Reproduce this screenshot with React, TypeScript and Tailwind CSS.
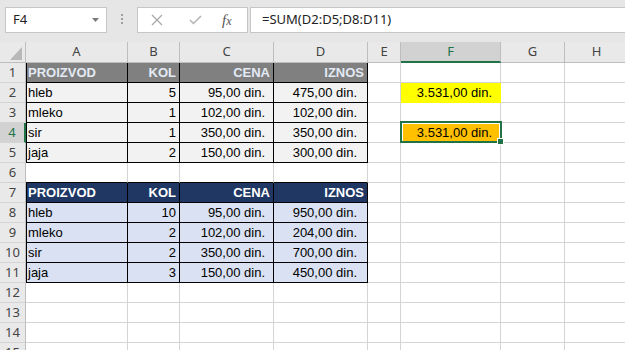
import clsx from "clsx";

type Kind = "h1" | "d1" | "h2" | "d2";

const COLS = ["A", "B", "C", "D", "E", "F", "G", "H"];

const table1 = [
  ["hleb", "5", "95,00 din.", "475,00 din."],
  ["mleko", "1", "102,00 din.", "102,00 din."],
  ["sir", "1", "350,00 din.", "350,00 din."],
  ["jaja", "2", "150,00 din.", "300,00 din."],
];

const table2 = [
  ["hleb", "10", "95,00 din.", "950,00 din."],
  ["mleko", "2", "102,00 din.", "204,00 din."],
  ["sir", "2", "350,00 din.", "700,00 din."],
  ["jaja", "3", "150,00 din.", "450,00 din."],
];

const header = ["PROIZVOD", "KOL", "CENA", "IZNOS"];

const kindBg: Record<Kind, string> = {
  h1: "bg-[#808080] text-[#e3eaf4] font-bold text-[12.5px]",
  d1: "bg-[#f2f2f2] text-black",
  h2: "bg-[#203764] text-white font-bold text-[12.5px]",
  d2: "bg-[#d9e1f2] text-black",
};

const cell =
  "box-border h-5 flex items-center whitespace-nowrap overflow-hidden text-[13px] font-['Liberation_Sans',Arial,sans-serif]";

// right padding of the four table columns (currency has trailing space)
const padFor = (i: number, kind: Kind) => {
  if (i === 0) return "pl-[2px] justify-start";
  if (kind === "h1" || kind === "h2") return "pr-[3px] justify-end";
  if (i === 1) return "pr-[3px] justify-end";
  if (i === 2) return "pr-[8px] justify-end";
  return "pr-[10px] justify-end";
};

function TableCells({ values, kind }: { values: string[]; kind: Kind }) {
  return (
    <>
      {values.map((v, i) => (
        <div
          key={i}
          className={clsx(
            cell,
            kindBg[kind],
            padFor(i, kind),
            "border-r border-b border-black",
            i === 0 && "shadow-[inset_1px_0_0_#000]",
          )}
        >
          {v}
        </div>
      ))}
    </>
  );
}

function Empty({ className }: { className?: string }) {
  return (
    <div
      className={clsx(cell, "border-r border-b border-[#d4d4d4]", className)}
    />
  );
}

function RowHead({ n }: { n: number }) {
  const sel = n === 4;
  return (
    <div
      className={clsx(
        "box-border h-5 flex items-center justify-center text-[13px] font-['Noto_Sans',sans-serif] border-b border-[#d4d4d4]",
        sel
          ? "bg-[#d2d2d2] text-[#217346] border-r-2 border-r-[#217346]"
          : "bg-[#e9e9e9] text-[#444] border-r border-r-[#bdbdbd]",
      )}
    >
      {n}
    </div>
  );
}

function FCell({ n }: { n: number }) {
  if (n === 2) {
    return (
      <div
        className={clsx(
          cell,
          "justify-end pr-[8px] bg-[#ffff00] border-r border-b border-[#ffff00]",
        )}
      >
        3.531,00 din.
      </div>
    );
  }
  if (n === 4) {
    return (
      <div className="relative box-border h-5 border-r border-b border-[#d4d4d4]">
        <div className="absolute left-[2px] top-[1px] w-[96px] h-[17px] bg-[#ffc000]" />
        <div className="absolute -left-px -top-[2px] z-10 w-[102px] h-[22px] border-2 border-[#217346]" />
        <div
          className={clsx(cell, "relative z-10 justify-end pr-[8px] h-[19px]")}
        >
          3.531,00 din.
        </div>
        <div className="absolute left-[96px] top-[15px] z-20 w-[7px] h-[7px] box-border bg-[#217346] border border-white" />
      </div>
    );
  }
  return <Empty />;
}

function Row({ n }: { n: number }) {
  let left: React.ReactNode;
  if (n === 1) left = <TableCells values={header} kind="h1" />;
  else if (n >= 2 && n <= 5)
    left = <TableCells values={table1[n - 2]} kind="d1" />;
  else if (n === 7) left = <TableCells values={header} kind="h2" />;
  else if (n >= 8 && n <= 11)
    left = <TableCells values={table2[n - 8]} kind="d2" />;
  else
    left = [0, 1, 2, 3].map((i) => (
      <Empty key={i} className={n === 6 ? "border-b-black" : undefined} />
    ));

  return (
    <>
      <RowHead n={n} />
      {left}
      <Empty />
      <FCell n={n} />
      <Empty />
      <Empty />
    </>
  );
}

function FormulaBar() {
  return (
    <div className="flex h-[42px] items-start bg-[#e6e6e6] pt-[7px]">
      <div className="ml-[5px] flex h-[26px] w-[102px] items-center justify-between border border-[#c6c6c6] bg-white pl-[7px] pr-[6px] font-['Noto_Sans',sans-serif] text-[13px] text-[#222]">
        <span>F4</span>
        <svg width="8" height="5" viewBox="0 0 8 5">
          <path d="M0 0 L7 0 L3.5 4 Z" fill="#7a7a7a" />
        </svg>
      </div>
      <div className="ml-[14px] mt-[7px] flex flex-col gap-[2px]">
        <span className="h-[2px] w-[2px] bg-[#a0a0a0]" />
        <span className="h-[2px] w-[2px] bg-[#a0a0a0]" />
        <span className="h-[2px] w-[2px] bg-[#a0a0a0]" />
      </div>
      <div className="ml-[14px] flex h-[26px] w-[111px] items-center border border-[#c6c6c6] bg-white">
        <svg className="ml-[13px]" width="12" height="12" viewBox="0 0 12 12">
          <path
            d="M1 1 L11 11 M11 1 L1 11"
            stroke="#a9a9a9"
            strokeWidth="1.3"
          />
        </svg>
        <svg className="ml-[26px]" width="13" height="10" viewBox="0 0 13 10">
          <path
            d="M1 5 L4.5 8.5 L12 1"
            stroke="#b3b3b3"
            strokeWidth="1.5"
            fill="none"
          />
        </svg>
        <span className="ml-[20px] font-['Liberation_Serif',serif] text-[15px] italic text-[#555]">
          f
          <span className="text-[12px]">x</span>
        </span>
      </div>
      <div className="ml-[2px] -mr-4 flex h-[26px] flex-1 items-center border border-[#c6c6c6] bg-white pl-[11px] font-['Noto_Sans',sans-serif] text-[13px] text-[#222]">
        =SUM(D2:D5;D8:D11)
      </div>
    </div>
  );
}

export default function App() {
  return (
    <div className="h-[350px] w-[625px] overflow-hidden bg-white">
      <FormulaBar />
      <div className="grid grid-cols-[26px_102px_52px_94px_94px_33px_100px_64px_64px]">
        <div className="relative box-border h-[21px] border-r border-b border-[#bdbdbd] bg-[#e9e9e9]">
          <svg
            className="absolute left-0 top-0"
            width="25"
            height="20"
            viewBox="0 0 25 20"
          >
            <polygon points="10,18 22,18 22,5" fill="#b8b8b8" />
          </svg>
        </div>
        {COLS.map((c) => (
          <div
            key={c}
            className={clsx(
              "box-border flex h-[21px] items-center justify-center font-['Noto_Sans',sans-serif] text-[13px]",
              c === "F"
                ? "bg-[#d2d2d2] text-[#217346] border-r border-r-[#bdbdbd] border-b-2 border-b-[#217346]"
                : "bg-[#e9e9e9] text-[#444] border-r border-b border-[#bdbdbd]",
            )}
          >
            {c}
          </div>
        ))}
        {Array.from({ length: 15 }, (_, i) => (
          <Row key={i} n={i + 1} />
        ))}
      </div>
    </div>
  );
}
